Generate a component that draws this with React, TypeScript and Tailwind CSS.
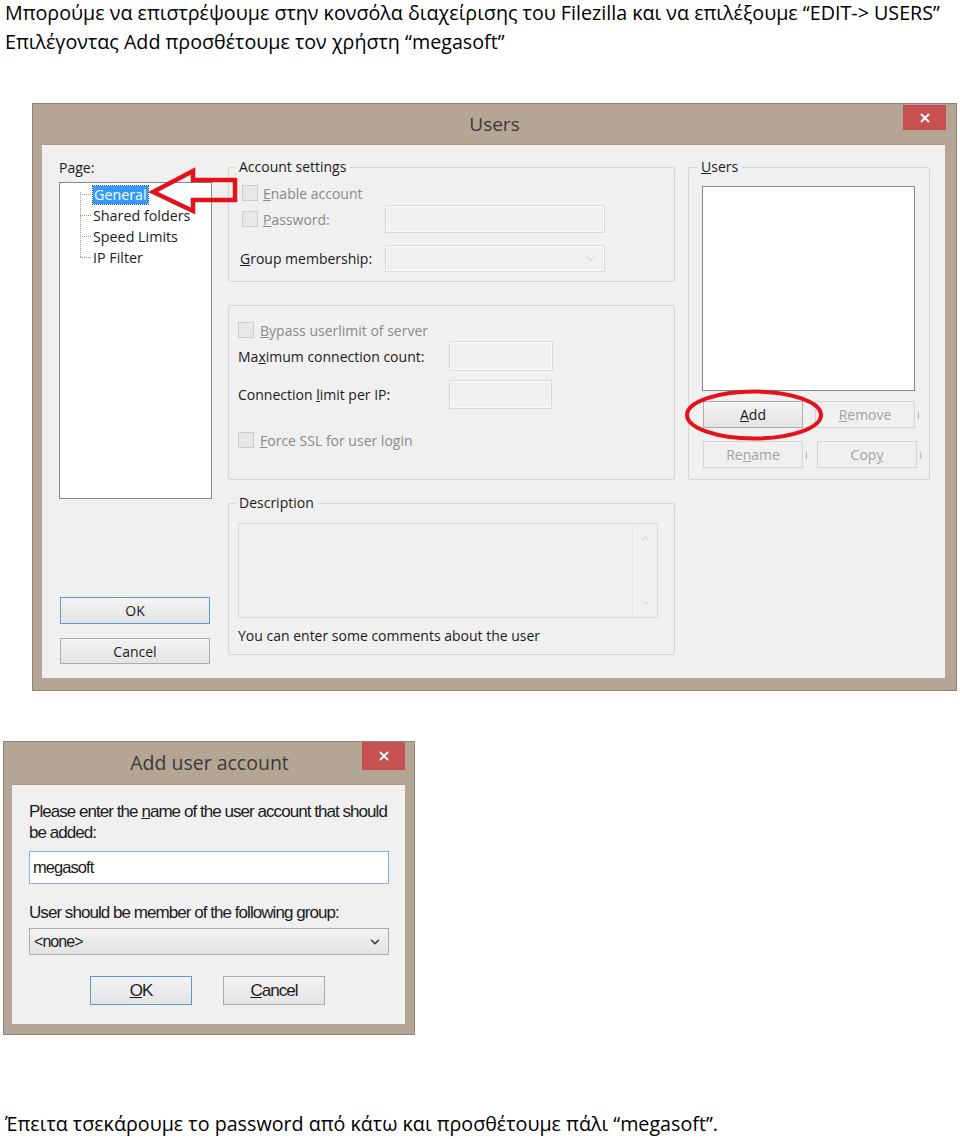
import { ChevronDown, ChevronUp, X } from "lucide-react";
import type { ReactNode } from "react";

function CloseButton({ h }: { h: string }) {
  return (
    <div className={`w-[43px] ${h} bg-[#c75050] flex items-center justify-center`}>
      <X className="w-[14px] h-[14px] text-white" strokeWidth={3.2} />
    </div>
  );
}

function CheckBox() {
  return <span className="block w-4 h-4 shrink-0 border border-[#cdcdcd] bg-[#e8e8e8]" />;
}

function Group({ label, labelInset = "ml-[6px]", className, children }: { label?: ReactNode; labelInset?: string; className: string; children: ReactNode }) {
  return (
    <div className={`relative border border-[#d5d5d5] rounded-[2px] ${className}`}>
      {label && <div className={`-mt-[10px] ${labelInset} w-fit px-[4px] bg-[#f0f0f0] leading-[18px]`}>{label}</div>}
      {children}
    </div>
  );
}

function DisabledBox({ w, h, combo }: { w: string; h: string; combo?: boolean }) {
  return (
    <div className={`${w} ${h} border border-[#d9d9d9] bg-[#f0f0f0] shadow-[inset_0_0_0_1px_#fafafa] flex items-center justify-end pr-[6px]`}>
      {combo && <ChevronDown className="w-[15px] h-[15px] text-[#c6c6c6]" strokeWidth={1.5} />}
    </div>
  );
}

function Btn({ children, disabled, primary, w = "w-[100px]", h = "h-[27px]" }: { children: ReactNode; disabled?: boolean; primary?: boolean; w?: string; h?: string }) {
  const border = disabled ? "border-[#d4d4d4]" : primary ? "border-[#5a9ad6]" : "border-[#adadad]";
  const bg = disabled ? "bg-[#f0f0f0]" : "bg-linear-to-b from-[#f3f3f3] to-[#e4e4e4]";
  const color = disabled ? "text-[#a3a3a3]" : "text-[#1b1b1b]";
  return <div className={`${w} ${h} border ${border} ${bg} ${color} flex items-center justify-center`}>{children}</div>;
}

function Tick() {
  return <span className="w-0 overflow-visible whitespace-nowrap text-[11px] leading-none text-[#acacac] pl-[2px]">i</span>;
}

function UsersDialog() {
  return (
    <div className="ml-[32px] mt-[47px] w-[925px] h-[588px] bg-[#b4a594] border border-[#8f8373] flex flex-col font-['Open_Sans',sans-serif] text-[14px] text-[#1b1b1b]">
      <div className="h-[40px] flex items-start shrink-0">
        <div className="w-[53px]" />
        <div className="flex-1 h-full flex items-center justify-center text-[19px] text-[#3a3a3a]">Users</div>
        <div className="mt-[1px] mr-[10px]">
          <CloseButton h="h-[25px]" />
        </div>
      </div>
      <div className="relative ml-[9px] mr-[11px] h-[534px] bg-[#f0f0f0] border-t border-[#a99b8a] flex pl-[17px] pt-[14px]">
        {/* left column */}
        <div className="w-[153px] flex flex-col">
          <div className="leading-[18px]">Page:</div>
          <div className="relative mt-[5px] h-[317px] bg-white border border-[#828790] pt-[1px] pl-[33px] text-[14.3px]">
            <svg className="absolute left-0 top-0" width="40" height="90">
              <g stroke="#9a9a9a" strokeWidth="1" strokeDasharray="1 1" fill="none">
                <line x1="20.5" y1="9" x2="20.5" y2="75" />
                <line x1="20" y1="11.5" x2="32" y2="11.5" />
                <line x1="20" y1="32.5" x2="32" y2="32.5" />
                <line x1="20" y1="53.5" x2="32" y2="53.5" />
                <line x1="20" y1="74.5" x2="32" y2="74.5" />
              </g>
            </svg>
            <div className="h-[21px] flex items-center">
              <span className="bg-[#3399ff] text-white px-[1px] leading-[18px] outline outline-1 outline-dotted outline-[#1c4f87]">General</span>
            </div>
            <div className="h-[21px] flex items-center">Shared folders</div>
            <div className="h-[21px] flex items-center">Speed Limits</div>
            <div className="h-[21px] flex items-center">IP Filter</div>
          </div>
          <div className="mt-[98px] ml-[1px]">
            <Btn primary w="w-[150px]">OK</Btn>
          </div>
          <div className="mt-[14px] ml-[1px]">
            <Btn w="w-[150px]" h="h-[26px]">Cancel</Btn>
          </div>
        </div>

        {/* middle column */}
        <div className="ml-[16px] w-[447px] flex flex-col">
          <Group label="Account settings" className="mt-[8px] h-[115px]">
            <div className="mt-[9px] h-[16px] pl-[13px] flex items-center gap-[5px] text-[#8a8a8a]">
              <CheckBox />
              <span>
                <u>E</u>nable account
              </span>
            </div>
            <div className="mt-[4px] h-[28px] pl-[13px] flex items-center">
              <div className="w-[143px] flex items-center gap-[5px] text-[#8a8a8a]">
                <CheckBox />
                <span>
                  <u>P</u>assword:
                </span>
              </div>
              <DisabledBox w="w-[220px]" h="h-[28px]" />
            </div>
            <div className="mt-[12px] h-[27px] pl-[11px] flex items-center">
              <div className="w-[145px]">
                <u>G</u>roup membership:
              </div>
              <DisabledBox w="w-[220px]" h="h-[27px]" combo />
            </div>
          </Group>

          <Group className="mt-[23px] h-[175px]">
            <div className="mt-[16px] h-[16px] pl-[9px] flex items-center gap-[6px] text-[#8a8a8a]">
              <CheckBox />
              <span>
                <u>B</u>ypass userlimit of server
              </span>
            </div>
            <div className="mt-[3px] h-[30px] pl-[9px] flex items-center">
              <div className="w-[211px]">
                Ma<u>x</u>imum connection count:
              </div>
              <DisabledBox w="w-[104px]" h="h-[30px]" />
            </div>
            <div className="mt-[9px] h-[29px] pl-[9px] flex items-center">
              <div className="w-[211px]">
                Connection <u>l</u>imit per IP:
              </div>
              <DisabledBox w="w-[103px]" h="h-[29px]" />
            </div>
            <div className="mt-[23px] h-[16px] pl-[9px] flex items-center gap-[6px] text-[#8a8a8a]">
              <CheckBox />
              <span>
                <u>F</u>orce SSL for user login
              </span>
            </div>
          </Group>

          <Group label="Description" className="mt-[23px] h-[152px]">
            <div className="mt-[11px] ml-[9px] w-[420px] h-[95px] border border-[#d9d9d9] bg-[#f0f0f0] flex justify-end">
              <div className="w-[25px] h-full border-l border-[#e6e6e6] flex flex-col items-center justify-between py-[8px]">
                <ChevronUp className="w-[13px] h-[13px] text-[#c2c2c2]" strokeWidth={1.5} />
                <ChevronDown className="w-[13px] h-[13px] text-[#c2c2c2]" strokeWidth={1.5} />
              </div>
            </div>
            <div className="mt-[9px] ml-[9px] leading-[18px]">You can enter some comments about the user</div>
          </Group>
        </div>

        {/* right column */}
        <div className="ml-[13px] w-[242px] flex flex-col">
          <Group
            label={
              <span>
                <u>U</u>sers
              </span>
            }
            labelInset="ml-[8px]"
            className="mt-[8px] h-[313px]"
          >
            <div className="mt-[10px] ml-[13px] w-[213px] h-[205px] bg-white border border-[#828790]" />
            <div className="mt-[10px] ml-[14px] flex items-center gap-[12px]">
              <Btn>
                <span>
                  <u>A</u>dd
                </span>
              </Btn>
              <div className="flex items-center">
                <Btn disabled>
                  <span>
                    <u>R</u>emove
                  </span>
                </Btn>
                <Tick />
              </div>
            </div>
            <div className="mt-[13px] ml-[14px] flex items-center gap-[12px]">
              <div className="flex items-center">
                <Btn disabled>
                  <span>
                    Re<u>n</u>ame
                  </span>
                </Btn>
                <Tick />
              </div>
              <div className="flex items-center">
                <Btn disabled>
                  <span>
                    Cop<u>y</u>
                  </span>
                </Btn>
                <Tick />
              </div>
            </div>
            <svg className="absolute left-[-5px] top-[221px] overflow-visible" width="140" height="52">
              <ellipse cx="70" cy="26" rx="67" ry="23.5" fill="none" stroke="#e3121b" strokeWidth="4" />
            </svg>
          </Group>
        </div>

        {/* annotation arrow */}
        <svg className="absolute left-[106px] top-[21px] overflow-visible" width="95" height="50">
          <path d="M5 26 L45 5 L45 14 L87 14 L87 34 L45 34 L45 45 Z" fill="none" stroke="#e3121b" strokeWidth="4.5" strokeLinejoin="miter" />
        </svg>
      </div>
    </div>
  );
}

function AddUserDialog() {
  return (
    <div className="ml-[3px] mt-[50px] w-[412px] h-[294px] bg-[#b4a594] border border-[#8f8373] flex flex-col">
      <div className="h-[42px] flex items-start shrink-0 font-['Open_Sans',sans-serif]">
        <div className="w-[53px]" />
        <div className="flex-1 h-full flex items-center justify-center text-[19.5px] text-[#3a3a3a]">Add user account</div>
        <div className="mr-[9px]">
          <CloseButton h="h-[28px]" />
        </div>
      </div>
      <div className="ml-[8px] mr-[9px] h-[240px] bg-[#f0f0f0] border-t border-[#a99b8a] pl-[17px] pt-[16px] font-['Liberation_Sans',Arial,sans-serif] text-[17px] tracking-[-0.95px] text-[#1b1b1b]">
        <div className="leading-[21px] w-[365px]">
          Please enter the <u>n</u>ame of the user account that should be added:
        </div>
        <div className="mt-[8px] w-[360px] h-[33px] bg-white border border-[#7eb4ea] flex items-center pl-[3px] text-[16.5px]">megasoft</div>
        <div className="mt-[18px] leading-[21px]">
          User should be member of the following <u>g</u>roup:
        </div>
        <div className="mt-[5px] w-[360px] h-[27px] border border-[#acacac] bg-linear-to-b from-[#f2f2f2] to-[#e3e3e3] flex items-center justify-between pl-[4px] pr-[6px] text-[16px]">
          <span>&lt;none&gt;</span>
          <ChevronDown className="w-[14px] h-[14px] text-[#333]" strokeWidth={2.6} />
        </div>
        <div className="mt-[21px] ml-[61px] flex gap-[31px] text-[17px]">
          <Btn primary w="w-[102px]" h="h-[29px]">
            <span>
              <u>O</u>K
            </span>
          </Btn>
          <Btn w="w-[102px]" h="h-[29px]">
            <span>
              <u>C</u>ancel
            </span>
          </Btn>
        </div>
      </div>
    </div>
  );
}

export default function App() {
  return (
    <div className="w-[960px] h-[1139px] bg-white overflow-hidden font-['Open_Sans',sans-serif] text-black">
      <div className="-mt-[2px] ml-[5px] text-[19.7px] leading-[29px]">
        <p>Μπορούμε να επιστρέψουμε στην κονσόλα διαχείρισης του Filezilla και να επιλέξουμε “EDIT-&gt; USERS”</p>
        <p>Επιλέγοντας Add προσθέτουμε τον χρήστη “megasoft”</p>
      </div>
      <UsersDialog />
      <AddUserDialog />
      <p className="mt-[74px] ml-[5px] text-[19.7px] leading-[29px]">Έπειτα τσεκάρουμε το password από κάτω και προσθέτουμε πάλι “megasoft”.</p>
    </div>
  );
}
